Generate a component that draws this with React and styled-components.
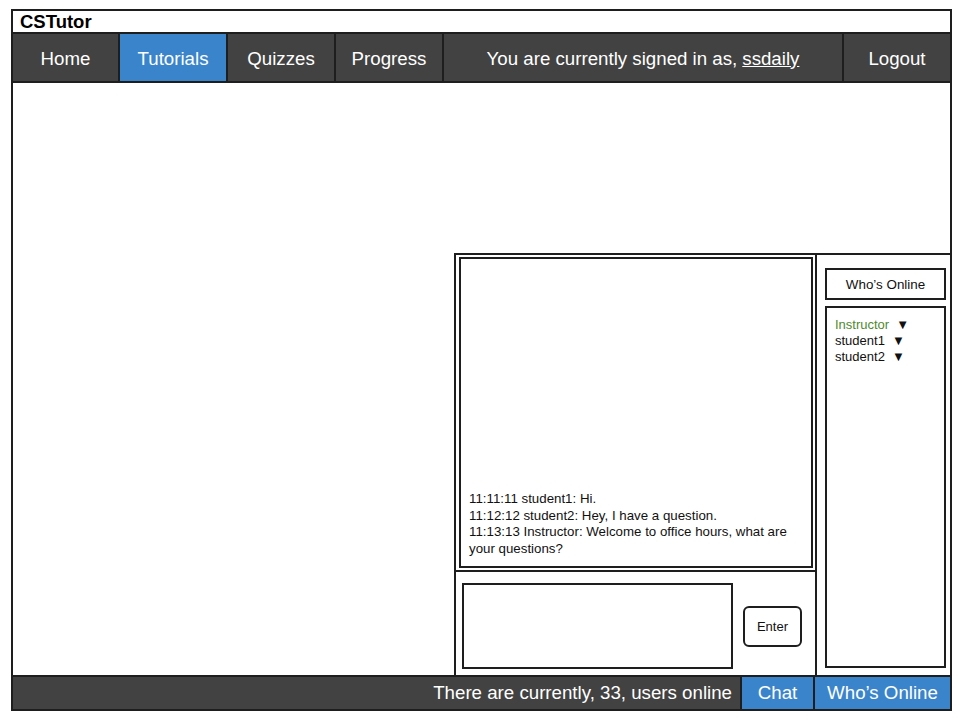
import React from "react";
import styled, { createGlobalStyle } from "styled-components";

const Global = createGlobalStyle`
  html, body { margin: 0; padding: 0; background: #fff; }
  body { font-family: "Liberation Sans", Arial, sans-serif; }
`;

const Frame = styled.div`
  box-sizing: border-box;
  margin: 9px 0 0 11px;
  width: 941px;
  height: 702px;
  border: 2px solid #1e1e1e;
  display: flex;
  flex-direction: column;
`;

const TitleBar = styled.div`
  height: 21px;
  flex: none;
  padding-left: 7px;
  font-size: 18.5px;
  font-weight: bold;
  line-height: 21px;
  color: #000;
`;

const Nav = styled.nav`
  box-sizing: border-box;
  height: 51px;
  flex: none;
  display: flex;
  background: #424242;
  border-top: 2px solid #1e1e1e;
  border-bottom: 2px solid #1e1e1e;
`;

const NavItem = styled.div`
  box-sizing: border-box;
  width: ${(p) => p.$w}px;
  flex: ${(p) => (p.$grow ? "1" : "none")};
  display: flex;
  align-items: center;
  justify-content: center;
  color: #fff;
  font-size: 18.7px;
  background: ${(p) => (p.$active ? "#3a84cc" : "transparent")};
  border-right: ${(p) => (p.$last ? "none" : "2px solid #1e1e1e")};
  padding-top: 2px;
`;

const Uline = styled.span`
  text-decoration: underline;
  margin-left: 5px;
`;

const Main = styled.div`
  flex: 1;
  display: flex;
  justify-content: flex-end;
  align-items: flex-end;
  min-height: 0;
`;

const ChatPanel = styled.div`
  box-sizing: border-box;
  width: 496px;
  height: 422px;
  border-top: 2px solid #1e1e1e;
  border-left: 2px solid #1e1e1e;
  display: flex;
`;

const ChatColumn = styled.div`
  box-sizing: border-box;
  width: 361px;
  flex: none;
  display: flex;
  flex-direction: column;
  border-right: 2px solid #1e1e1e;
`;

const LogBox = styled.div`
  box-sizing: border-box;
  margin: 2px 0 0 3px;
  width: 354px;
  height: 311px;
  border: 2px solid #1e1e1e;
  display: flex;
  flex-direction: column;
  justify-content: flex-end;
  padding: 0 10px 9px 8px;
  font-size: 13.3px;
  line-height: 16.5px;
  color: #111;
`;

const InputArea = styled.div`
  flex: 1;
  border-top: 2px solid #1e1e1e;
  margin-top: 2px;
  display: flex;
  align-items: flex-start;
  padding: 11px 0 0 6px;
  gap: 10px;
`;

const TextBox = styled.div`
  box-sizing: border-box;
  width: 271px;
  height: 86px;
  border: 2px solid #1e1e1e;
`;

const EnterButton = styled.div`
  box-sizing: border-box;
  margin-top: 23px;
  width: 59px;
  height: 41px;
  border: 2px solid #1e1e1e;
  border-radius: 6px;
  display: flex;
  align-items: center;
  justify-content: center;
  font-size: 13px;
  color: #111;
`;

const SideColumn = styled.div`
  flex: 1;
  display: flex;
  flex-direction: column;
  padding: 13px 4px 7px 8px;
  gap: 6px;
`;

const SideTitle = styled.div`
  box-sizing: border-box;
  height: 32px;
  border: 2px solid #1e1e1e;
  display: flex;
  align-items: center;
  justify-content: center;
  font-size: 13.4px;
  color: #111;
`;

const UserList = styled.div`
  box-sizing: border-box;
  flex: 1;
  border: 2px solid #1e1e1e;
  padding: 9px 8px;
  font-size: 13px;
  line-height: 16px;
`;

const User = styled.div`
  color: ${(p) => (p.$instructor ? "#4e8a2e" : "#111")};
`;

const Arrow = styled.span`
  color: #111;
  margin-left: 7px;
  font-size: 13px;
`;

const Footer = styled.div`
  box-sizing: border-box;
  height: 34px;
  flex: none;
  display: flex;
  background: #424242;
  border-top: 2px solid #1e1e1e;
`;

const FooterText = styled.div`
  flex: 1;
  display: flex;
  align-items: center;
  justify-content: flex-end;
  padding-right: 8px;
  color: #fff;
  font-size: 18.7px;
`;

const FooterTab = styled.div`
  box-sizing: border-box;
  width: ${(p) => p.$w}px;
  display: flex;
  align-items: center;
  justify-content: center;
  background: #3a84cc;
  color: #fff;
  font-size: 18.7px;
  border-left: 2px solid #1e1e1e;
`;

export default function App() {
  return (
    <>
      <Global />
      <Frame>
        <TitleBar>CSTutor</TitleBar>
        <Nav>
          <NavItem $w={107}>Home</NavItem>
          <NavItem $w={108} $active>Tutorials</NavItem>
          <NavItem $w={108}>Quizzes</NavItem>
          <NavItem $w={108}>Progress</NavItem>
          <NavItem $grow>
            You are currently signed in as,<Uline>ssdaily</Uline>
          </NavItem>
          <NavItem $w={106} $last>Logout</NavItem>
        </Nav>
        <Main>
          <ChatPanel>
            <ChatColumn>
              <LogBox>
                <div>11:11:11 student1: Hi.</div>
                <div>11:12:12 student2: Hey, I have a question.</div>
                <div>11:13:13 Instructor: Welcome to office hours, what are your questions?</div>
              </LogBox>
              <InputArea>
                <TextBox />
                <EnterButton>Enter</EnterButton>
              </InputArea>
            </ChatColumn>
            <SideColumn>
              <SideTitle>Who’s Online</SideTitle>
              <UserList>
                <User $instructor>Instructor<Arrow>▼</Arrow></User>
                <User>student1<Arrow>▼</Arrow></User>
                <User>student2<Arrow>▼</Arrow></User>
              </UserList>
            </SideColumn>
          </ChatPanel>
        </Main>
        <Footer>
          <FooterText>There are currently, 33, users online</FooterText>
          <FooterTab $w={73}>Chat</FooterTab>
          <FooterTab $w={137}>Who’s Online</FooterTab>
        </Footer>
      </Frame>
    </>
  );
}
